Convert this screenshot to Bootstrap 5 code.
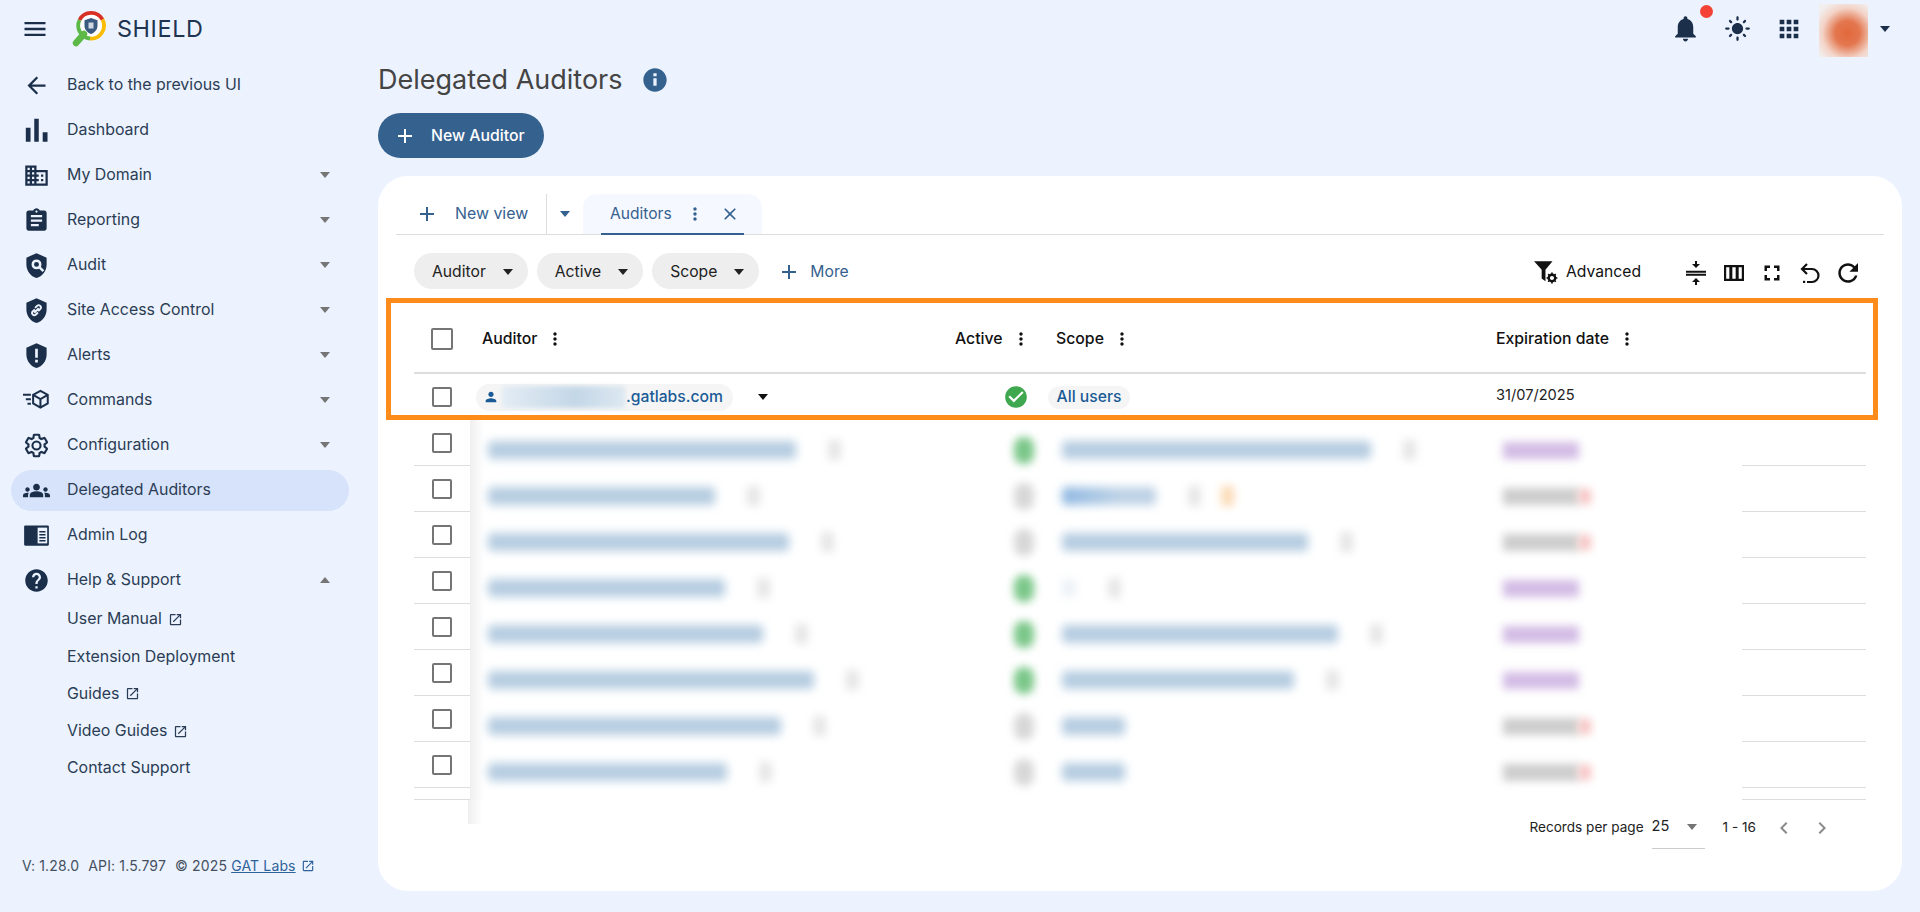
<!DOCTYPE html>
<html lang="en">
<head>
  <meta charset="UTF-8">
  <title>Delegated Auditors</title>
  <link href="https://cdn.jsdelivr.net/npm/bootstrap@5.3.0/dist/css/bootstrap.min.css" rel="stylesheet">
  <style>
    html, body { height: 100%; }
    body { background: #ecf3ff; font-family: Inter, "Liberation Sans", sans-serif; font-size: 15.9px; color: #2b3d55; overflow: hidden; }
    svg { fill: currentColor; flex-shrink: 0; display: block; }
    .caret { width: 0; height: 0; border-left: 5.5px solid transparent; border-right: 5.5px solid transparent; border-top: 6px solid currentColor; flex-shrink: 0; }
    .caret.up { border-top: 0; border-bottom: 6px solid currentColor; }

    .top-bar { height: 57px; color: #1b2f4b; }
    .brand { font-size: 23.4px; letter-spacing: .6px; line-height: 1; color: #1f3450; }
    .menu-btn { width: 28px; height: 28px; margin-left: 21px; margin-right: 21px; }
    .logo { margin-right: 9px; }
    .top-right { padding-right: 30px; }
    .bell { width: 31px; height: 31px; }
    .bell-dot { position: absolute; top: -8px; left: 30px; width: 13px; height: 13px; border-radius: 50%; background: #f44336; }
    .sun { width: 27px; height: 27px; margin-left: 22.5px; }
    .apps { width: 28px; height: 28px; margin-left: 24px; }
    .avatar { width: 49px; height: 53px; margin: 4px 12px 0 16.5px; background: radial-gradient(circle at 58% 55%, #e3683c 0, #e3774f 30%, #f3d4c8 62%, #f2eeee 85%); }

    .sidebar { width: 360px; padding-top: 7.5px; }
    .side-item { height: 41px; margin: 0 11px 4px; padding: 0 19px 0 11.5px; border-radius: 21px; color: #2b3d55; text-decoration: none; }
    .side-item svg.ic { color: #1b2f4b; width: 27px; height: 27px; margin-right: 17.5px; }
    .side-item .caret { color: #757575; margin-left: auto; }
    .side-item.active { background: #d7e3fa; }
    .sub-list { margin-top: -4px; }
    .sub-item { height: 37.3px; padding-left: 67px; color: #2b3d55; text-decoration: none; }
    .sub-item svg { width: 15px; height: 15px; margin-left: 6px; }
    .side-foot { margin-top: auto; padding: 0 0 36px 22px; font-size: 14px; letter-spacing: .15px; color: #44505f; line-height: 20px; white-space: nowrap; }
    .side-foot span { margin-right: 9px; }
    .side-foot a { color: #2f6299; }
    .side-foot svg { width: 14px; height: 14px; margin-left: 5px; color: #2f6299; display: inline-block; vertical-align: -2px; }

    .main-col { padding: 0 18px 21px; min-width: 0; }
    .page-title { height: 44px; padding-top: 2px; }
    .page-title h1 { font-size: 27px; font-weight: 400; color: #444; margin: 0; }
    .page-title svg { width: 28px; height: 28px; color: #35618f; margin-left: 18px; }
    .btn-new { margin-top: 12px; height: 45px; width: 166px; padding: 0 0 0 15px; border-radius: 23px; background: #35618f; color: #fff; border: 0; font-size: 15.8px; font-weight: 500; }
    .btn-new:hover { background: #35618f; color: #fff; }
    .btn-new svg { width: 24px; height: 24px; margin-right: 14px; }

    .main-card { margin-top: 18px; border-radius: 30px; border: 0; padding: 18px 18px 0; }
    .view-tabs { height: 41px; border-bottom: 1px solid #ddd; color: #35618f; }
    .new-view { width: 151px; height: 40px; padding-left: 19px; border-right: 1px solid #ddd; }
    .new-view svg { width: 24px; height: 24px; margin-right: 16px; }
    .tab-caret { width: 36px; height: 40px; color: #35618f; }
    .view-tab { width: 179px; height: 40px; background: #f5f8fe; border-radius: 14px 14px 0 0; padding-left: 27px; font-size: 15.6px; }
    .view-tab::after { content: ""; position: absolute; left: 18px; right: 18px; bottom: -1px; height: 2px; background: #35618f; }
    .view-tab svg { width: 20px; height: 20px; margin-left: 13px; }
    .view-tab svg + svg { margin-left: 15px; }

    .filters { margin-top: 18px; padding: 0 18px; height: 36px; color: #222; font-size: 15.7px; }
    .filter-chip { height: 36px; border-radius: 18px; background: #eee; margin-right: 9px; padding: 1px 15px 0 18px; }
    .filter-chip .caret { margin-left: 17px; color: #222; }
    .more-link { color: #35618f; margin-left: 9px; padding-top: 1px; }
    .more-link svg { width: 24px; height: 24px; margin-right: 9px; }
    .tool-ic { color: #111; }
    .tool-ic svg { width: 24px; height: 24px; }
    .advanced { margin-right: 43px; color: #111; padding-top: 1px; }
    .advanced svg { width: 26px; height: 26px; margin-right: 7px; }
    .tools { gap: 14px; margin-right: 6px; padding-top: 3px; }

    .auditor-table { margin: 16px 18px 0; position: relative; }
    .t-row { display: grid; grid-template-columns: 56px 475px 95px 446px 380px; align-items: center; }
    .t-head { height: 69px; border-bottom: 2px solid #ddd; font-size: 15.8px; font-weight: 500; color: #111; }
    .t-head svg { width: 20px; height: 20px; margin-left: 8px; }
    .t-body { height: 46px; font-size: 14.6px; color: #222; }
    .cell-check { justify-self: stretch; display: flex; justify-content: center; }
    .box { width: 20px; height: 20px; border: 2px solid #757575; border-radius: 2px; background: #fff; }
    .box.lg { width: 22px; height: 22px; }
    .h-auditor { padding-left: 12px; }
    .h-active { padding-left: 10px; }
    .h-scope { padding-left: 16px; }
    .h-date { padding-left: 10px; }
    .t-body .h-date { padding-bottom: 3px; }
    .user-chip { margin-left: 6px; height: 27px; width: 257px; border-radius: 14px; background: #f5f5f5; padding-left: 7px; color: #1a5b97; font-size: 15.7px; font-weight: 500; }
    .user-chip svg { width: 16px; height: 16px; margin-right: 3px; }
    .hidden-name { width: 123px; height: 22px; background: linear-gradient(to right, #e3ecf4, #c4d7e7 60%, #dde8f1); filter: blur(2px); margin-right: 1px; }
    .row-caret { color: #111; margin-left: 25px; }
    .ok-ic { width: 26px; height: 26px; color: #3fa84f; margin-left: 58px; }
    .scope-chip { margin-left: 8px; height: 23px; width: 82px; border-radius: 12px; background: #f5f5f5; color: #1a5b97; font-size: 15.7px; font-weight: 500; justify-content: center; }

    .b-row { display: grid; grid-template-columns: 56px 544px 50px 442px 236px 124px; grid-template-rows: 46px; height: 46px; }
    .b-row.stub { height: 12px; grid-template-rows: 12px; }
    .b-check, .b-end { border-bottom: 1px solid #ddd; }
    .b-cell { background: linear-gradient(to right, #efefef, #fff 14px); }
    .b-cell ~ .b-cell { background: none; }
    .b-pad { height: 60px; display: flex; align-items: center; }
    .b-email { padding-left: 18px; }
    .b-scope { margin-left: -2px; }
    .b-date { margin-left: -3px; }
    .bar { height: 18px; border-radius: 4px; filter: blur(5px); background: #b6cde1; }
    .bar.dark { background: linear-gradient(to right, #8fb8e2, #bdd2e5 60%); }
    .dot { width: 13px; height: 20px; margin-left: 32px; background: #e6e6e6; filter: blur(4px); }
    .dot.orange { background: #fbdcb8; margin-left: 20px; }
    .st { width: 20px; height: 27px; border-radius: 9px; filter: blur(4.5px); background: #d8d8d8; }
    .st.on { background: #7bc789; }
    .d { width: 76px; height: 17px; filter: blur(4.5px); }
    .d.purple { background: #d3bce5; }
    .d.gray { background: #cdcdcd; }
    .d-red { width: 12px; height: 15px; filter: blur(4.5px); background: #f7c2c2; }

    .table-foot { height: 55px; padding-right: 34px; font-size: 13.6px; color: #222; background: linear-gradient(to right, #efefef, #fff) no-repeat 56px 0 / 14px 24px; }
    .pager-select { width: 53px; height: 43px; margin: 0 18px 0 8px; border-bottom: 1px solid #ccc; font-size: 14.6px; }
    .pager-select .caret { color: #757575; margin-left: auto; margin-right: 8px; }
    .pager-btn { width: 24px; height: 24px; color: #8a8a8a; margin-left: 14px; }
    .orange-box { position: absolute; left: 8px; top: 122px; width: 1492px; height: 122px; border: 5px solid #ff8c1a; pointer-events: none; }
  </style>
</head>
<body class="d-flex flex-column">

<svg width="0" height="0" class="position-absolute">
  <symbol id="i-menu" viewBox="0 0 24 24"><path d="M3 18h18v-2H3v2zm0-5h18v-2H3v2zm0-7v2h18V6H3z"/></symbol>
  <symbol id="i-back" viewBox="0 0 24 24"><path d="M20 11H7.830l5.590-5.590L12 4l-8 8 8 8 1.410-1.410L7.830 13H20v-2z"/></symbol>
  <symbol id="i-bars" viewBox="0 0 24 24"><path d="M2.500 9.500h4.200V22H2.500zM10 1.500h4V22h-4zM17.500 13.500h4.300V22h-4.300z"/></symbol>
  <symbol id="i-domain" viewBox="0 0 24 24"><path d="M12 7V3H2v18h20V7H12zM6 19H4v-2h2v2zm0-4H4v-2h2v2zm0-4H4V9h2v2zm0-4H4V5h2v2zm4 12H8v-2h2v2zm0-4H8v-2h2v2zm0-4H8V9h2v2zm0-4H8V5h2v2zm10 12h-8v-2h2v-2h-2v-2h2v-2h-2V9h8v10zm-2-8h-2v2h2v-2zm0 4h-2v2h2v-2z"/></symbol>
  <symbol id="i-report" viewBox="0 0 24 24"><path d="M19 3h-4.180C14.400 1.840 13.300 1 12 1c-1.300 0-2.400.84-2.820 2H5c-1.100 0-2 .9-2 2v14c0 1.100.9 2 2 2h14c1.100 0 2-.9 2-2V5c0-1.100-.9-2-2-2zm-7 0c.55 0 1 .45 1 1s-.45 1-1 1-1-.45-1-1 .45-1 1-1zm2 14H7v-2h7v2zm3-4H7v-2h10v2zm0-4H7V7h10v2z"/></symbol>
  <symbol id="i-audit" viewBox="0 0 24 24"><path d="M12 1L3 5v6c0 5.550 3.840 10.740 9 12 5.160-1.260 9-6.450 9-12V5l-9-4z"/><circle cx="12" cy="11" r="3.300" fill="none" stroke="#ecf3ff" stroke-width="2.200"/><path d="M14.500 13.500l3.600 3.600" stroke="#ecf3ff" stroke-width="2.200"/></symbol>
  <symbol id="i-link" viewBox="0 0 24 24"><path d="M12 1L3 5v6c0 5.550 3.840 10.740 9 12 5.160-1.260 9-6.450 9-12V5l-9-4z"/><path d="M10.500 11l-2 2a2 2 0 0 0 2.800 2.800l2-2M13.500 12.500l2-2a2 2 0 0 0-2.800-2.800l-2 2M10 14l4-4" fill="none" stroke="#ecf3ff" stroke-width="1.700"/></symbol>
  <symbol id="i-alert" viewBox="0 0 24 24"><path d="M12 1L3 5v6c0 5.550 3.840 10.740 9 12 5.160-1.260 9-6.450 9-12V5l-9-4z"/><path d="M10.800 6h2.400v8h-2.400zM10.800 15.800h2.400v2.400h-2.400z" fill="#ecf3ff"/></symbol>
  <symbol id="i-cmd" viewBox="0 0 24 24"><path d="M15.500 3.500l6.500 3.500v7.500l-6.500 3.800-6.500-3.800V7zM9 7l6.500 3.700L22 7M15.500 10.700v7.600" fill="none" stroke="currentColor" stroke-width="1.800"/><path d="M0 6h7v1.700H0zM2.500 10h4.500v1.700H2.500zM4 14h3v1.700H4z"/></symbol>
  <symbol id="i-gear" viewBox="0 0 24 24"><path fill="none" stroke="currentColor" stroke-width="1.900" d="M19.140 12.940c.04-.3.06-.61.06-.94 0-.32-.02-.64-.07-.94l2.030-1.580c.18-.14.23-.41.12-.61l-1.920-3.320c-.12-.22-.37-.29-.59-.22l-2.390.96c-.5-.38-1.030-.7-1.620-.94l-.36-2.540c-.04-.24-.24-.41-.48-.41h-3.840c-.24 0-.43.17-.47.41l-.36 2.540c-.59.24-1.130.57-1.620.94l-2.390-.96c-.22-.08-.47 0-.59.22L2.740 8.870c-.12.21-.08.47.12.61l2.030 1.580c-.05.3-.09.63-.09.94s.02.64.07.94l-2.030 1.580c-.18.14-.23.41-.12.61l1.920 3.320c.12.22.37.29.59.22l2.390-.96c.5.38 1.030.7 1.620.94l.36 2.540c.05.24.24.41.48.41h3.840c.24 0 .44-.17.47-.41l.36-2.540c.59-.24 1.130-.56 1.620-.94l2.390.96c.22.08.47 0 .59-.22l1.920-3.320c.12-.22.07-.47-.12-.61l-2.010-1.580zM12 15.600c-1.980 0-3.600-1.620-3.600-3.600s1.620-3.600 3.600-3.600 3.600 1.620 3.600 3.600-1.620 3.600-3.600 3.600z"/></symbol>
  <symbol id="i-groups" viewBox="0 0 24 24"><path d="M12 12.750c1.630 0 3.070.39 4.240.9 1.080.48 1.760 1.560 1.760 2.730V18H6v-1.610c0-1.180.68-2.260 1.760-2.730 1.170-.52 2.610-.91 4.240-.91zM4 13c1.100 0 2-.9 2-2s-.9-2-2-2-2 .9-2 2 .9 2 2 2zm1.130 1.100c-.37-.06-.74-.1-1.130-.1-.99 0-1.930.21-2.780.58C.48 14.900 0 15.620 0 16.430V18h4.500v-1.610c0-.83.23-1.610.63-2.290zM20 13c1.100 0 2-.9 2-2s-.9-2-2-2-2 .9-2 2 .9 2 2 2zm4 3.430c0-.81-.48-1.530-1.220-1.850-.85-.37-1.790-.58-2.780-.58-.39 0-.76.04-1.130.1.4.68.63 1.460.63 2.290V18H24v-1.570zM12 6c1.660 0 3 1.340 3 3s-1.340 3-3 3-3-1.340-3-3 1.340-3 3-3z"/></symbol>
  <symbol id="i-log" viewBox="0 0 24 24"><path d="M2 3h20a1 1 0 0 1 1 1v16a1 1 0 0 1-1 1H2a1 1 0 0 1-1-1V4a1 1 0 0 1 1-1z"/><path d="M13 5h8.500v14H13z" fill="#ecf3ff"/><path d="M14.500 8h5.500v1.300h-5.500zM14.500 10.700h5.500V12h-5.500zM14.500 13.400h5.500v1.300h-5.500zM14.500 16h5.500v1.300h-5.500z"/></symbol>
  <symbol id="i-help" viewBox="0 0 24 24"><path d="M12 2C6.480 2 2 6.480 2 12s4.480 10 10 10 10-4.480 10-10S17.520 2 12 2zm1 17h-2v-2h2v2zm2.070-7.750l-.9.920C13.450 12.900 13 13.500 13 15h-2v-.5c0-1.100.45-2.100 1.170-2.830l1.240-1.260c.37-.36.59-.86.59-1.410 0-1.100-.9-2-2-2s-2 .9-2 2H8c0-2.210 1.790-4 4-4s4 1.790 4 4c0 .88-.36 1.680-.93 2.250z"/></symbol>
  <symbol id="i-open" viewBox="0 0 24 24"><path d="M19 19H5V5h7V3H5c-1.110 0-2 .9-2 2v14c0 1.100.89 2 2 2h14c1.100 0 2-.9 2-2v-7h-2v7zM14 3v2h3.590l-9.830 9.830 1.410 1.410L19 6.410V10h2V3h-7z"/></symbol>
  <symbol id="i-info" viewBox="0 0 24 24"><path d="M12 2C6.480 2 2 6.480 2 12s4.480 10 10 10 10-4.480 10-10S17.520 2 12 2zm1.400 15h-2.800v-6.500h2.800V17zm0-8.200h-2.800V6.300h2.800v2.500z"/></symbol>
  <symbol id="i-add" viewBox="0 0 24 24"><path d="M19 13h-6v6h-2v-6H5v-2h6V5h2v6h6v2z"/></symbol>
  <symbol id="i-close" viewBox="0 0 24 24"><path d="M19 6.410L17.590 5 12 10.590 6.410 5 5 6.410 10.590 12 5 17.590 6.410 19 12 13.410 17.590 19 19 17.590 13.410 12z"/></symbol>
  <symbol id="i-more" viewBox="0 0 24 24"><path d="M12 8c1.100 0 2-.9 2-2s-.9-2-2-2-2 .9-2 2 .9 2 2 2zm0 2c-1.100 0-2 .9-2 2s.9 2 2 2 2-.9 2-2-.9-2-2-2zm0 6c-1.100 0-2 .9-2 2s.9 2 2 2 2-.9 2-2-.9-2-2-2z"/></symbol>
  <symbol id="i-bell" viewBox="0 0 24 24"><path d="M12 22c1.100 0 2-.9 2-2h-4c0 1.100.89 2 2 2zm6-6v-5c0-3.070-1.640-5.640-4.500-6.320V4c0-.83-.67-1.500-1.500-1.500s-1.500.67-1.500 1.500v.68C7.630 5.360 6 7.920 6 11v5l-2 2v1h16v-1l-2-2z"/></symbol>
  <symbol id="i-sun" viewBox="0 0 24 24"><path d="M12 7c-2.760 0-5 2.240-5 5s2.240 5 5 5 5-2.240 5-5-2.240-5-5-5zM2 13h2c.55 0 1-.45 1-1s-.45-1-1-1H2c-.55 0-1 .45-1 1s.45 1 1 1zm18 0h2c.55 0 1-.45 1-1s-.45-1-1-1h-2c-.55 0-1 .45-1 1s.45 1 1 1zM11 2v2c0 .55.45 1 1 1s1-.45 1-1V2c0-.55-.45-1-1-1s-1 .45-1 1zm0 18v2c0 .55.45 1 1 1s1-.45 1-1v-2c0-.55-.45-1-1-1s-1 .45-1 1zM5.990 4.580c-.39-.39-1.030-.39-1.410 0-.39.39-.39 1.030 0 1.410l1.060 1.060c.39.39 1.030.39 1.410 0s.39-1.030 0-1.410L5.990 4.580zm12.370 12.370c-.39-.39-1.030-.39-1.410 0-.39.39-.39 1.030 0 1.410l1.060 1.060c.39.39 1.030.39 1.410 0 .39-.39.39-1.030 0-1.410l-1.060-1.060zm1.060-10.960c.39-.39.39-1.030 0-1.410-.39-.39-1.030-.39-1.410 0l-1.060 1.060c-.39.39-.39 1.030 0 1.410s1.030.39 1.410 0l1.060-1.060zM7.050 18.360c.39-.39.39-1.030 0-1.410-.39-.39-1.030-.39-1.410 0l-1.060 1.060c-.39.39-.39 1.030 0 1.410s1.030.39 1.410 0l1.060-1.060z"/></symbol>
  <symbol id="i-apps" viewBox="0 0 24 24"><path d="M4 8h4V4H4v4zm6 12h4v-4h-4v4zm-6 0h4v-4H4v4zm0-6h4v-4H4v4zm6 0h4v-4h-4v4zm6-10v4h4V4h-4zm-6 4h4V4h-4v4zm6 6h4v-4h-4v4zm0 6h4v-4h-4v4z"/></symbol>
  <symbol id="i-filter" viewBox="0 0 24 24"><path d="M1 2h17l-6.500 8v10.500L8 18v-8z"/><circle cx="17.500" cy="17.500" r="3" fill="none" stroke="currentColor" stroke-width="2.200"/><path d="M17.500 12.500v2M17.500 20.500v2M12.500 17.500h2M20.500 17.500h2M14 14l1.400 1.400M19.600 19.600l1.400 1.400M14 21l1.400-1.400M19.600 15.400l1.400-1.400" stroke="currentColor" stroke-width="1.500"/></symbol>
  <symbol id="i-compress" viewBox="0 0 24 24"><path d="M8 21h3v3h2v-3h3l-4-4-4 4zM16 3h-3V0h-2v3H8l4 4 4-4zM2 9.700v2h20v-2H2zm0 3v2h20v-2H2z"/></symbol>
  <symbol id="i-cols" viewBox="0 0 24 24"><path d="M2 4v16h20V4H2zm5.330 13.800H4.200V6.200h3.130v11.600zm6.340 0h-3.340V6.200h3.340v11.600zm6.130 0h-3.130V6.200h3.130v11.600z"/></symbol>
  <symbol id="i-full" viewBox="0 0 24 24"><path d="M7 14H4.500v5.500H10V17H7v-3zM4.500 10H7V7h3V4.500H4.500V10zM17 17h-3v2.500h5.500V14H17v3zM14 4.500V7h3v3h2.500V4.500H14z"/></symbol>
  <symbol id="i-undo" viewBox="0 0 24 24"><path d="M9 3L4 8l5 5M4.500 8H14a6.500 6.500 0 0 1 0 13H9" fill="none" stroke="currentColor" stroke-width="2.200"/><path d="M5 19.800h2.200V22H5z"/></symbol>
  <symbol id="i-redo" viewBox="0 0 24 24"><path d="M18.800 5.200C17 3.300 14.600 2.300 12 2.300 6.600 2.300 2.300 6.600 2.300 12s4.300 9.700 9.700 9.700c4.500 0 8.300-3.100 9.400-7.300h-2.500c-1 2.800-3.700 4.800-6.900 4.800-4 0-7.200-3.200-7.200-7.200S8 4.800 12 4.800c2 0 3.800.8 5.100 2.200L13.400 10.700H22V2z"/></symbol>
  <symbol id="i-person" viewBox="0 0 24 24"><path d="M12 12c2.210 0 4-1.790 4-4s-1.790-4-4-4-4 1.790-4 4 1.790 4 4 4zm0 2c-2.670 0-8 1.340-8 4v2h16v-2c0-2.660-5.330-4-8-4z"/></symbol>
  <symbol id="i-ok" viewBox="0 0 24 24"><path d="M12 2C6.480 2 2 6.480 2 12s4.480 10 10 10 10-4.480 10-10S17.520 2 12 2zm-2 15l-5-5 1.410-1.410L10 14.170l7.590-7.590L19 8l-9 9z"/></symbol>
  <symbol id="i-prev" viewBox="0 0 24 24"><path d="M15.410 7.410L14 6l-6 6 6 6 1.410-1.410L10.830 12z"/></symbol>
  <symbol id="i-next" viewBox="0 0 24 24"><path d="M10 6L8.590 7.410 13.170 12l-4.580 4.590L10 18l6-6z"/></symbol>
</svg>

<header class="top-bar d-flex align-items-center flex-shrink-0">
  <svg class="menu-btn"><use href="#i-menu"/></svg>
  <svg width="38" height="38" viewBox="0 0 38 38" class="logo">
    <circle cx="21" cy="15.500" r="12" fill="#fff"/>
    <path d="M14 24L6 33" stroke="#5cb947" stroke-width="6.500" stroke-linecap="round"/>
    <path d="M9.500 10A13 13 0 0 1 32.500 9.500" fill="none" stroke="#d93025" stroke-width="3.800"/>
    <path d="M32.500 9.500A13 13 0 0 1 20 28.500" fill="none" stroke="#fbbc04" stroke-width="3.800"/>
    <path d="M20 28.500A13 13 0 0 1 9.500 10" fill="none" stroke="#5cb947" stroke-width="3.800"/>
    <path d="M21 8l6.500 2.300v5.700c0 3.700-2.800 6.500-6.500 8-3.700-1.500-6.500-4.300-6.500-8v-5.700z" fill="#3a5a80"/>
    <path d="M18.500 12.500h5v6h-5z" fill="#cfd8e3"/>
  </svg>
  <span class="brand">SHIELD</span>
  <div class="top-right ms-auto d-flex align-items-center">
    <div class="position-relative">
      <svg class="bell"><use href="#i-bell"/></svg>
      <span class="bell-dot"></span>
    </div>
    <svg class="sun"><use href="#i-sun"/></svg>
    <svg class="apps"><use href="#i-apps"/></svg>
    <div class="avatar"></div>
    <span class="caret"></span>
  </div>
</header>

<div class="d-flex flex-grow-1" style="min-height:0">
  <aside class="sidebar d-flex flex-column flex-shrink-0">
    <a class="side-item d-flex align-items-center" href="#"><svg class="ic"><use href="#i-back"/></svg>Back to the previous UI</a>
    <a class="side-item d-flex align-items-center" href="#"><svg class="ic"><use href="#i-bars"/></svg>Dashboard</a>
    <a class="side-item d-flex align-items-center" href="#"><svg class="ic"><use href="#i-domain"/></svg>My Domain<span class="caret"></span></a>
    <a class="side-item d-flex align-items-center" href="#"><svg class="ic"><use href="#i-report"/></svg>Reporting<span class="caret"></span></a>
    <a class="side-item d-flex align-items-center" href="#"><svg class="ic"><use href="#i-audit"/></svg>Audit<span class="caret"></span></a>
    <a class="side-item d-flex align-items-center" href="#"><svg class="ic"><use href="#i-link"/></svg>Site Access Control<span class="caret"></span></a>
    <a class="side-item d-flex align-items-center" href="#"><svg class="ic"><use href="#i-alert"/></svg>Alerts<span class="caret"></span></a>
    <a class="side-item d-flex align-items-center" href="#"><svg class="ic"><use href="#i-cmd"/></svg>Commands<span class="caret"></span></a>
    <a class="side-item d-flex align-items-center" href="#"><svg class="ic"><use href="#i-gear"/></svg>Configuration<span class="caret"></span></a>
    <a class="side-item active d-flex align-items-center" href="#"><svg class="ic"><use href="#i-groups"/></svg>Delegated Auditors</a>
    <a class="side-item d-flex align-items-center" href="#"><svg class="ic"><use href="#i-log"/></svg>Admin Log</a>
    <a class="side-item d-flex align-items-center" href="#"><svg class="ic"><use href="#i-help"/></svg>Help &amp; Support<span class="caret up"></span></a>
    <div class="sub-list">
      <a class="sub-item d-flex align-items-center" href="#">User Manual<svg><use href="#i-open"/></svg></a>
      <a class="sub-item d-flex align-items-center" href="#">Extension Deployment</a>
      <a class="sub-item d-flex align-items-center" href="#">Guides<svg><use href="#i-open"/></svg></a>
      <a class="sub-item d-flex align-items-center" href="#">Video Guides<svg><use href="#i-open"/></svg></a>
      <a class="sub-item d-flex align-items-center" href="#">Contact Support</a>
    </div>
    <div class="side-foot"><span>V: 1.28.0</span><span>API: 1.5.797</span>© 2025 <a href="#">GAT Labs</a><svg><use href="#i-open"/></svg></div>
  </aside>

  <main class="main-col flex-grow-1 d-flex flex-column">
    <div class="page-title d-flex align-items-center flex-shrink-0">
      <h1>Delegated Auditors</h1>
      <svg><use href="#i-info"/></svg>
    </div>
    <button class="btn btn-new d-flex align-items-center flex-shrink-0"><svg><use href="#i-add"/></svg>New Auditor</button>

    <div class="card main-card flex-grow-1 position-relative">
      <div class="view-tabs d-flex align-items-start">
        <div class="new-view d-flex align-items-center"><svg><use href="#i-add"/></svg>New view</div>
        <div class="tab-caret d-flex align-items-center justify-content-center"><span class="caret"></span></div>
        <div class="view-tab d-flex align-items-center position-relative">
          Auditors
          <svg><use href="#i-more"/></svg>
          <svg><use href="#i-close"/></svg>
        </div>
      </div>

      <div class="filters d-flex align-items-center">
        <div class="filter-chip d-flex align-items-center">Auditor<span class="caret"></span></div>
        <div class="filter-chip d-flex align-items-center">Active<span class="caret"></span></div>
        <div class="filter-chip d-flex align-items-center">Scope<span class="caret"></span></div>
        <div class="more-link d-flex align-items-center"><svg><use href="#i-add"/></svg>More</div>
        <div class="advanced ms-auto d-flex align-items-center"><svg><use href="#i-filter"/></svg>Advanced</div>
        <div class="tools tool-ic d-flex align-items-center">
          <svg><use href="#i-compress"/></svg>
          <svg><use href="#i-cols"/></svg>
          <svg><use href="#i-full"/></svg>
          <svg><use href="#i-undo"/></svg>
          <svg><use href="#i-redo"/></svg>
        </div>
      </div>

      <div class="auditor-table">
        <div class="t-row t-head">
          <div class="cell-check"><span class="box lg"></span></div>
          <div class="h-auditor d-flex align-items-center">Auditor<svg><use href="#i-more"/></svg></div>
          <div class="h-active d-flex align-items-center">Active<svg><use href="#i-more"/></svg></div>
          <div class="h-scope d-flex align-items-center">Scope<svg><use href="#i-more"/></svg></div>
          <div class="h-date d-flex align-items-center">Expiration date<svg><use href="#i-more"/></svg></div>
        </div>
        <div class="t-row t-body">
          <div class="cell-check"><span class="box"></span></div>
          <div class="d-flex align-items-center">
            <div class="user-chip d-flex align-items-center"><svg><use href="#i-person"/></svg><span class="hidden-name"></span>.gatlabs.com</div>
            <span class="caret row-caret"></span>
          </div>
          <div><svg class="ok-ic"><use href="#i-ok"/></svg></div>
          <div><div class="scope-chip d-flex align-items-center">All users</div></div>
          <div class="h-date">31/07/2025</div>
        </div>
        <div id="blurRows"></div>
      </div>

      <div class="table-foot d-flex align-items-center justify-content-end mx-3">
        <span>Records per page</span>
        <div class="pager-select d-flex align-items-center">25<span class="caret"></span></div>
        <span>1 - 16</span>
        <svg class="pager-btn ms-3"><use href="#i-prev"/></svg>
        <svg class="pager-btn"><use href="#i-next"/></svg>
      </div>

      <div class="orange-box"></div>
    </div>
  </main>
</div>

<script>
  // masked rows: email bar, active state, scope bar, expiration state
  const rows = [
    { email: 308, on: true,  scope: 309, date: 'purple' },
    { email: 227, on: false, scope: 94,  date: 'gray', dark: true, flag: true },
    { email: 301, on: false, scope: 246, date: 'gray' },
    { email: 237, on: true,  scope: 14,  date: 'purple', faint: true },
    { email: 275, on: true,  scope: 276, date: 'purple' },
    { email: 326, on: true,  scope: 232, date: 'purple' },
    { email: 293, on: false, scope: 63,  date: 'gray', noDot: true },
    { email: 239, on: false, scope: 63,  date: 'gray', noDot: true }
  ];

  const container = document.getElementById('blurRows');

  rows.forEach(r => {
    const row = document.createElement('div');
    row.className = 'b-row';
    row.innerHTML = `
      <div class="b-check d-flex justify-content-center align-items-center"><span class="box"></span></div>
      <div class="b-cell"><div class="b-pad b-email">
        <div class="bar" style="width:${r.email}px"></div><div class="dot"></div>
      </div></div>
      <div class="b-cell"><div class="b-pad"><div class="st ${r.on ? 'on' : ''}"></div></div></div>
      <div class="b-cell"><div class="b-pad b-scope">
        <div class="bar ${r.dark ? 'dark' : ''} ${r.faint ? 'opacity-25' : ''}" style="width:${r.scope}px"></div>
        ${r.noDot ? '' : '<div class="dot"></div>'}
        ${r.flag ? '<div class="dot orange"></div>' : ''}
      </div></div>
      <div class="b-cell"><div class="b-pad b-date">
        <div class="d ${r.date}"></div>
        ${r.date === 'gray' ? '<div class="d-red"></div>' : ''}
      </div></div>
      <div class="b-end"></div>
    `;
    container.appendChild(row);
  });

  const stub = document.createElement('div');
  stub.className = 'b-row stub';
  stub.innerHTML = '<div class="b-check"></div><div class="b-cell"></div><div></div><div></div><div></div><div class="b-end"></div>';
  container.appendChild(stub);
</script>

<script src="https://cdn.jsdelivr.net/npm/bootstrap@5.3.0/dist/js/bootstrap.bundle.min.js"></script>
</body>
</html>
